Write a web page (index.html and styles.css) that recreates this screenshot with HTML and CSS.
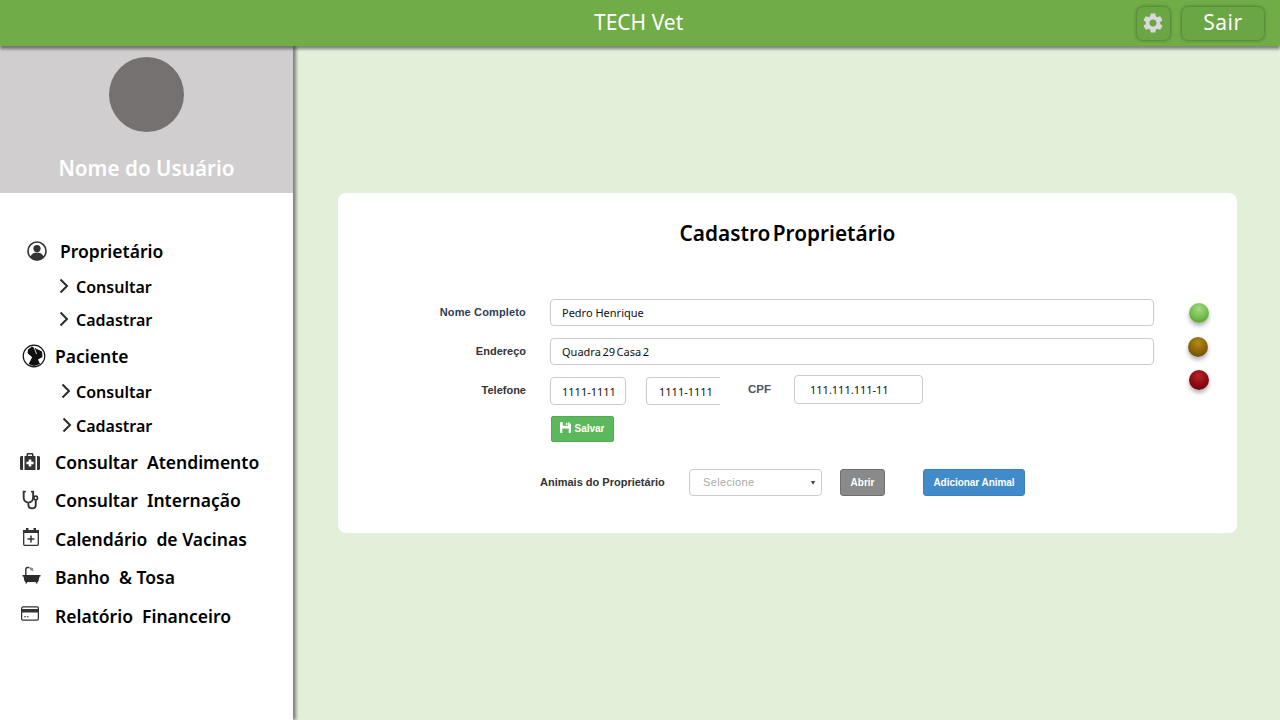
FILE: index.html
```html
<!DOCTYPE html>
<html lang="pt-BR">
<head>
<meta charset="utf-8">
<title>TECH Vet</title>
<link rel="stylesheet" href="styles.css">
</head>
<body>
<header class="topbar">
  <div class="brand">TECH Vet</div>
  <div class="top-actions">
    <button class="top-btn gear-btn" aria-label="Configurações">
      <svg viewBox="0 0 24 24" width="24" height="24"><path fill="#d9d9d9" d="M19.14 12.94c.04-.3.06-.61.06-.94 0-.32-.02-.64-.07-.94l2.03-1.58c.18-.14.23-.41.12-.61l-1.92-3.32c-.12-.22-.37-.29-.59-.22l-2.39.96c-.5-.38-1.03-.7-1.62-.94l-.36-2.54c-.04-.24-.24-.41-.48-.41h-3.84c-.24 0-.43.17-.47.41l-.36 2.54c-.59.24-1.13.57-1.62.94l-2.39-.96c-.22-.08-.47 0-.59.22L2.74 8.87c-.12.21-.08.47.12.61l2.03 1.58c-.05.3-.09.63-.09.94s.02.64.07.94l-2.03 1.58c-.18.14-.23.41-.12.61l1.92 3.32c.12.22.37.29.59.22l2.39-.96c.5.38 1.03.7 1.62.94l.36 2.54c.05.24.24.41.48.41h3.84c.24 0 .44-.17.47-.41l.36-2.54c.59-.24 1.13-.56 1.62-.94l2.39.96c.22.08.47 0 .59-.22l1.92-3.32c.12-.22.07-.47-.12-.61l-2.01-1.58zM12 15.6c-1.98 0-3.6-1.62-3.6-3.6s1.62-3.6 3.6-3.6 3.6 1.62 3.6 3.6-1.62 3.6-3.6 3.6z"/></svg>
    </button>
    <button class="top-btn exit-btn">Sair</button>
  </div>
</header>
<div class="layout">
  <aside class="sidebar">
    <div class="profile">
      <div class="avatar"></div>
      <div class="user-name">Nome do Usuário</div>
    </div>
    <nav class="menu">
      <a class="item item-owner">
        <svg class="ico" viewBox="0 0 20 20" width="20" height="20"><circle cx="10" cy="10" r="9" fill="#fff" stroke="#333" stroke-width="1.6"/><circle cx="10" cy="7.6" r="3.6" fill="#333"/><path fill="#333" d="M3.4 16c.8-3 3.600-4.400 6.600-4.400s5.800 1.400 6.600 4.400c-1.600 2-4 3.400-6.600 3.400s-5-1.400-6.600-3.400z"/></svg>
        <span>Proprietário</span>
      </a>
      <a class="sub sub-a"><svg class="chev" viewBox="0 0 10 16" width="10" height="16"><path d="M1.500 1.500 8 8l-6.500 6.500" fill="none" stroke="#2b2b2b" stroke-width="2"/></svg><span>Consultar</span></a>
      <a class="sub sub-a"><svg class="chev" viewBox="0 0 10 16" width="10" height="16"><path d="M1.500 1.500 8 8l-6.500 6.500" fill="none" stroke="#2b2b2b" stroke-width="2"/></svg><span>Cadastrar</span></a>
      <a class="item">
        <svg class="ico ico-paw" viewBox="0 0 24 24" width="24" height="24"><circle cx="12" cy="12" r="10.800" fill="#fff" stroke="#111" stroke-width="1.200"/><path fill="#111" d="M6 5.500 10 2.500 13 4 20 7.500 20.500 13 16 15.500 18 20 12 22 6.500 20 8.500 16 10 13 5.500 9.500z"/><path d="M5 9 9.500 13.500 6 20M12 3 14.500 10" fill="none" stroke="#fff" stroke-width=".8"/></svg>
        <span>Paciente</span>
      </a>
      <a class="sub sub-b"><svg class="chev" viewBox="0 0 10 16" width="10" height="16"><path d="M1.500 1.500 8 8l-6.500 6.500" fill="none" stroke="#2b2b2b" stroke-width="2"/></svg><span>Consultar</span></a>
      <a class="sub sub-c"><svg class="chev" viewBox="0 0 10 16" width="10" height="16"><path d="M1.500 1.500 8 8l-6.500 6.500" fill="none" stroke="#2b2b2b" stroke-width="2"/></svg><span>Cadastrar</span></a>
      <a class="item">
        <svg class="ico" viewBox="0 0 20 18" width="20" height="18"><path fill="#333" d="M6.500 3V1.500C6.500.7 7.200 0 8 0h4c.8 0 1.500.7 1.500 1.500V3H12V1.500H8V3z"/><path fill="#333" d="M0 4.500C0 3.700.7 3 1.500 3H3v14H1.500C.7 17 0 16.300 0 15.500zM17 3h1.500c.8 0 1.500.7 1.500 1.500v11c0 .8-.7 1.500-1.500 1.500H17z"/><path fill-rule="evenodd" fill="#333" d="M4.500 3h11v14h-11zM8.700 6.500v2.300H6.400v2.400h2.300v2.300h2.600v-2.300h2.300V8.800h-2.300V6.500z"/></svg>
        <span>Consultar&nbsp; Atendimento</span>
      </a>
      <a class="item item-steth">
        <svg class="ico" viewBox="1.500 0 15 19" width="17" height="20"><path d="M4.500 1.500H2.500v5.500c0 3 2 5 4.500 5s4.500-2 4.500-5V1.500H9.500M7 12v2c0 2 1.500 3.500 3.500 3.500s3.500-1.500 3.500-3.500V9.500" fill="none" stroke="#333" stroke-width="1.800"/><circle cx="14" cy="7.500" r="1.700" fill="none" stroke="#333" stroke-width="1.500"/></svg>
        <span>Consultar&nbsp; Internação</span>
      </a>
      <a class="item item-cal">
        <svg class="ico" viewBox="2 1 16 18" width="16" height="18"><rect x="2.700" y="3.700" width="14.600" height="14.600" rx="1" fill="#fff" stroke="#333" stroke-width="1.300"/><path fill="#333" d="M2 3h16v3H2zM5 1h2.500v4H5zM12.500 1H15v4h-2.500z"/><path d="M10 8.500v7M6.500 12h7" stroke="#333" stroke-width="1.500"/></svg>
        <span>Calendário&nbsp; de Vacinas</span>
      </a>
      <a class="item item-bath">
        <svg class="ico" viewBox="0 0 20 19" width="19" height="18"><path fill="#2b2b2b" d="M.5 9.500h19v1.500h-1l-1 4.500c-.2.800-.8 1.300-1.500 1.300l.5 1.700h-1.500l-.7-1.700H5.700L5 18.500H3.500l.5-1.700c-.7 0-1.300-.5-1.500-1.300L1.500 11h-1z"/><path d="M4 9.500V3.500c0-1.300.8-2 2-2h1.500" fill="none" stroke="#333" stroke-width="1.500"/><path fill="#8d8d8d" d="M7 1l4.500 1 .5 3.500L9 4.500z"/></svg>
        <span>Banho&nbsp; &amp; Tosa</span>
      </a>
      <a class="item item-card">
        <svg class="ico" viewBox="0 0 20 16" width="18" height="15"><rect x=".7" y=".7" width="18.600" height="14.600" rx="1.500" fill="#fff" stroke="#333" stroke-width="1.400"/><path fill="#333" d="M1 3h18v4H1zM3.500 11h2v1.200h-2zM6.500 11h2v1.200h-2z"/></svg>
        <span>Relatório&nbsp; Financeiro</span>
      </a>
    </nav>
  </aside>
  <main class="content">
    <section class="card">
      <h1 class="card-title">Cadastro Proprietário</h1>
      <div class="form-wrap">
        <div class="fields">
          <div class="row row-name">
            <label class="lbl lbl-dark">Nome Completo</label>
            <input class="field field-wide" value="Pedro Henrique">
          </div>
          <div class="row row-addr">
            <label class="lbl">Endereço</label>
            <input class="field field-wide field-tight" value="Quadra 29 Casa 2">
          </div>
          <div class="row row-phones">
            <label class="lbl lbl-phone">Telefone</label>
            <input class="field phone" value="1111-1111">
            <input class="field phone phone-cut" value="1111-1111">
            <label class="lbl-cpf">CPF</label>
            <input class="field cpf" value="111.111.111-11">
          </div>
          <div class="save-row">
            <button class="btn btn-save">
              <svg viewBox="0 0 12 12" width="11" height="11"><path fill="#fff" fill-rule="evenodd" d="M0 1c0-.6.4-1 1-1h8.500L12 2.500V11c0 .6-.4 1-1 1H1c-.6 0-1-.4-1-1zM3 0v4h6V0zM6.500 .8h1.500v2.400H6.500zM2.500 7v5h7V7z"/></svg>
              <span class="save-text">Salvar</span>
            </button>
          </div>
        </div>
        <div class="leds">
          <span class="led led-green"></span>
          <span class="led led-amber"></span>
          <span class="led led-red"></span>
        </div>
      </div>
      <div class="animals">
        <span class="animals-label">Animais do Proprietário</span>
        <div class="select"><span class="select-text">Selecione</span><span class="caret">▾</span></div>
        <button class="btn btn-open">Abrir</button>
        <button class="btn btn-add">Adicionar Animal</button>
      </div>
    </section>
  </main>
</div>
</body>
</html>
```

FILE: styles.css
```css
* { box-sizing: border-box; }
html, body { margin: 0; height: 100%; overflow: hidden; }
body {
  width: 1280px;
  height: 720px;
  display: flex;
  flex-direction: column;
  font-family: "Noto Sans", "Open Sans", sans-serif;
  background: #e2efd9;
  color: #000;
}
.topbar {
  height: 46px;
  flex: none;
  background: #70ad47;
  box-shadow: 0 3px 3px rgba(0, 0, 0, .45);
  position: relative;
  z-index: 3;
  display: flex;
  align-items: center;
  justify-content: flex-end;
  padding-right: 16px;
}
.brand {
  position: absolute;
  left: 594px;
  top: 6px;
  color: #fff;
  font-size: 21px;
  line-height: 32px;
}
.top-actions { display: flex; gap: 12px; }
.top-btn {
  height: 33px;
  border: 0;
  border-radius: 6px;
  background: #6ba644;
  box-shadow: 0 0 3px 1px rgba(60, 100, 40, .6);
  padding: 0;
  display: flex;
  align-items: center;
  justify-content: center;
  color: #fff;
  font-family: inherit;
}
.gear-btn { width: 33px; padding-right: 1px; }
.exit-btn { width: 82px; padding-bottom: 2px; font-size: 21px; letter-spacing: .5px; }
.layout { flex: 1; display: flex; min-height: 0; }
.sidebar {
  width: 293px;
  flex: none;
  background: #fff;
  box-shadow: 3px 0 3px rgba(60, 60, 60, .6);
  position: relative;
  z-index: 2;
}
.profile {
  height: 147px;
  background: #d0cece;
  display: flex;
  flex-direction: column;
  align-items: center;
  padding-top: 11px;
}
.avatar { width: 75px; height: 75px; border-radius: 50%; background: #767171; }
.user-name {
  margin-top: 20px;
  color: #fff;
  font-size: 20.700px;
  font-weight: 600;
  line-height: 32px;
}
.menu {
  margin-top: 40px;
  display: grid;
  grid-template-rows: 36px 36px 30px 42px 30px 38px 34px 42px 36px 40px 38px;
}
.item, .sub { display: flex; align-items: center; font-weight: 600; color: #000; }
.item { padding-left: 20px; font-size: 17.500px; }
.item .ico { flex: none; margin-right: 15px; }
.item-owner { padding-left: 27px; }
.item-owner .ico { margin-right: 13px; }
.item .ico-paw { margin-left: 2px; margin-right: 9px; }
.item-steth .ico { margin-left: 2px; margin-right: 16px; }
.item-cal .ico { margin-left: 3px; margin-right: 16px; margin-top: -4px; }
.item-bath .ico { margin-left: 2px; margin-right: 14px; margin-top: -4px; }
.item-card .ico { margin-left: 1px; margin-right: 16px; margin-top: -5px; }
.sub { font-size: 16px; }
.sub .chev { flex: none; margin-top: -2px; }
.sub-a { padding-left: 59px; }
.sub-a .chev { margin-right: 7px; }
.sub-b { padding-left: 61px; }
.sub-b .chev { margin-right: 5px; }
.sub-c { padding-left: 62px; }
.sub-c .chev { margin-right: 4px; }
.content { flex: 1; padding: 147px 43px 0 45px; }
.card {
  width: 899px;
  height: 340px;
  background: #fff;
  border-radius: 8px;
  padding-top: 21px;
}
.card-title {
  margin: 0;
  text-align: center;
  font-size: 20.800px;
  font-weight: 600;
  line-height: 39px;
  word-spacing: -3px;
}
.form-wrap { display: flex; margin-top: 46px; }
.fields { width: 816px; flex: none; }
.row { display: flex; align-items: center; }
.row-name { height: 27px; }
.row-addr { height: 27px; margin-top: 12px; }
.row-phones { height: 30px; margin-top: 10px; align-items: flex-start; }
.lbl {
  width: 188px;
  margin-right: 24px;
  margin-bottom: 2px;
  flex: none;
  text-align: right;
  font: bold 11px "Liberation Sans", sans-serif;
  color: #333;
}
.lbl-dark { color: #2f3e55; letter-spacing: .15px; }
.lbl-phone { line-height: 30px; margin-bottom: 0; }
.lbl-cpf {
  margin: 0 23px 0 28px;
  font: bold 11.500px/28px "Liberation Sans", sans-serif;
  color: #4d5566;
}
.field {
  height: 27px;
  border: 1px solid #ccc;
  border-radius: 4px;
  background: #fff;
  padding: 0 11px;
  font: 11px "Noto Sans", sans-serif;
  color: #111;
  outline: none;
}
.field-wide { width: 604px; }
.field-tight { word-spacing: -1.300px; }
.phone { width: 76px; height: 28px; margin-top: 2px; padding: 0 0 0 11px; }
.phone-cut { width: 74px; margin-left: 20px; padding-left: 12px; border-right: 0; border-radius: 4px 0 0 4px; }
.cpf { width: 129px; height: 29px; padding-left: 15px; }
.save-row { margin: 11px 0 0 213px; }
.btn {
  border: 0;
  border-radius: 2px;
  color: #fff;
  font: bold 10px "Liberation Sans", sans-serif;
  padding: 0;
}
.btn-save {
  width: 63px;
  height: 26px;
  background: #5cb85c;
  display: flex;
  align-items: center;
  justify-content: center;
  gap: 3px;
  border: 1px solid #4cae4c;
}
.btn-save svg { margin-top: -3px; }
.save-text { margin-top: -1px; }
.leds {
  margin-left: 35px;
  margin-top: 4px;
  display: flex;
  flex-direction: column;
  gap: 14px;
}
.led {
  width: 20px;
  height: 20px;
  border-radius: 50%;
  box-shadow: 0 3px 4px rgba(0, 0, 0, .3);
}
.led-green { background: radial-gradient(circle at 50% 30%, #a3dc80 0, #74bf4f 50%, #4f9030 100%); }
.led-amber { background: radial-gradient(circle at 50% 30%, #b18a1c 0, #8b6508 50%, #5f4404 100%); margin-left: -1px; }
.led-red { background: radial-gradient(circle at 50% 30%, #b5262c 0, #8e0c10 50%, #5e0406 100%); margin-top: -1px; }
.animals { display: flex; align-items: center; margin: 27px 0 0 202px; height: 27px; }
.animals-label {
  width: 149px;
  margin-bottom: 1px;
  font: bold 11px "Liberation Sans", sans-serif;
  color: #333;
}
.select {
  width: 133px;
  height: 27px;
  border: 1px solid #ccc;
  border-radius: 4px;
  display: flex;
  align-items: center;
  justify-content: space-between;
  padding: 0 6px 0 13px;
  font: 11px "Liberation Sans", sans-serif;
  letter-spacing: .35px;
  color: #aaa;
}
.select-text { margin-top: -1px; }
.caret { color: #444; font-size: 8px; letter-spacing: 0; }
.btn-open {
  width: 45px;
  height: 27px;
  margin-left: 18px;
  background: #8a8a8a;
  border: 1px solid #6f6f6f;
  border-radius: 3px;
}
.btn-add {
  width: 102px;
  height: 27px;
  margin-left: 38px;
  background: #428bca;
  border: 1px solid #3d80bb;
  border-radius: 3px;
  letter-spacing: -.05px;
}
```
